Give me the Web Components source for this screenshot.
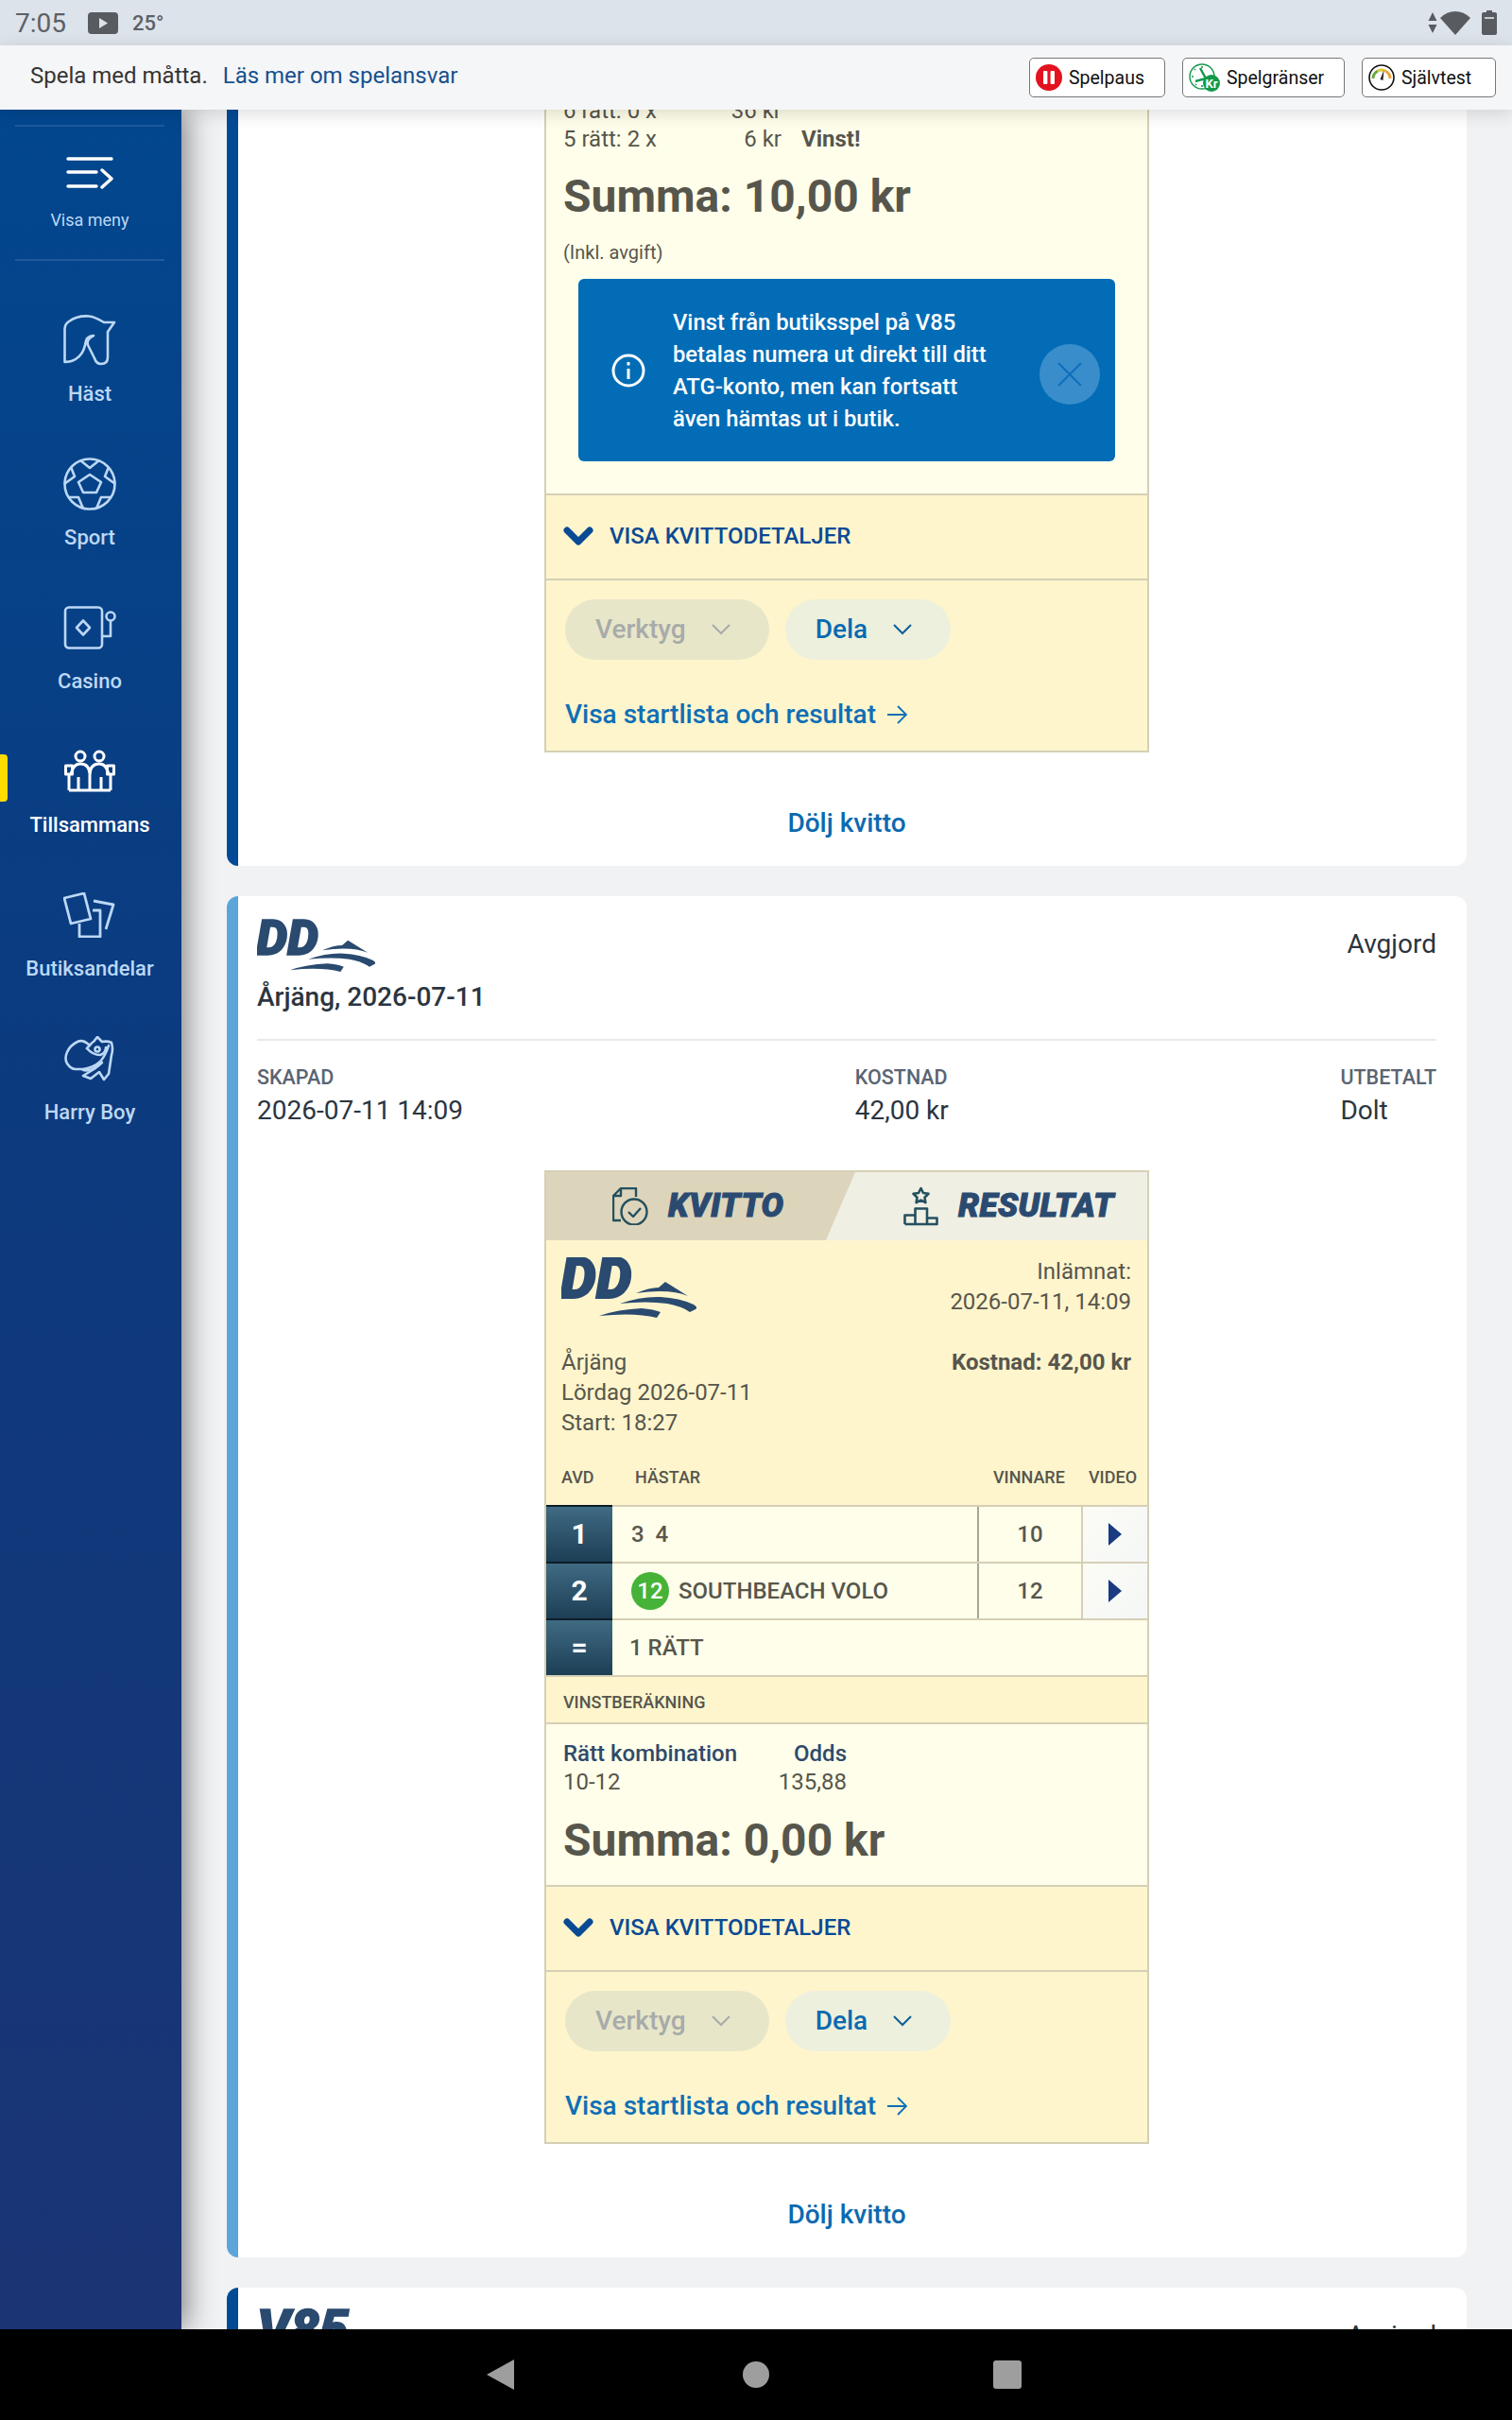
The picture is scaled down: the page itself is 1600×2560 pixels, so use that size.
<!DOCTYPE html>
<html lang="sv">
<head>
<meta charset="utf-8">
<title>Mina spel</title>
<style>
    html, body
    {
        margin: 0;
        height: 2560px;
        overflow: hidden;
        font-family: Roboto, "Liberation Sans", sans-serif;
    }

    body
    {
        display: flex;
        flex-direction: column;
        background: #000;
    }

    .shell
    {
        flex: 1;
        display: flex;
        min-height: 0;
    }
</style>
</head>
<body>
<atg-status-bar></atg-status-bar>

<atg-top-bar>
    <atg-limit-button style="width: 144px">
        <svg slot="icon" width="28" height="28" viewBox="0 0 28 28"><circle cx="14" cy="14" r="14" fill="#e2131f"/><rect x="8" y="7" width="4.4" height="14" rx="1" fill="#fff"/><rect x="15.6" y="7" width="4.4" height="14" rx="1" fill="#fff"/></svg>
        Spelpaus
    </atg-limit-button>
    <atg-limit-button style="width: 172px">
        <svg slot="icon" width="33" height="32" viewBox="0 0 33 32"><circle cx="14" cy="15" r="13" fill="none" stroke="#12994a" stroke-width="1.4"/><path d="M12 6l6 11-11 3" fill="none" stroke="#12994a" stroke-width="2.4"/><path d="M14 4v2M3 15h2M6 7l1 1M7 24l1-1M14 26v-2" stroke="#12994a" stroke-width="1.6"/><circle cx="24" cy="22" r="9" fill="#12994a"/><text x="24" y="27" font-family="Roboto" font-size="13" font-weight="700" fill="#fff" text-anchor="middle">Kr</text></svg>
        Spelgränser
    </atg-limit-button>
    <atg-limit-button style="width: 142px">
        <svg slot="icon" width="28" height="28" viewBox="0 0 28 28"><circle cx="14" cy="14" r="13" fill="#fff" stroke="#111" stroke-width="1.6"/><path d="M5 15a9.5 9.5 0 0 1 5-8" fill="none" stroke="#6aa83f" stroke-width="3"/><path d="M10 7a9.5 9.5 0 0 1 8 0" fill="none" stroke="#e2c83a" stroke-width="3"/><path d="M18 7a9.5 9.5 0 0 1 5 8" fill="none" stroke="#eda23a" stroke-width="3"/><path d="M16.500 6l-4 10 3 1z" fill="#222"/></svg>
        Självtest
    </atg-limit-button>
</atg-top-bar>

<div class="shell">
    <atg-side-menu>
        <atg-menu-item>
            <svg slot="icon" width="56" height="54" viewBox="0 0 56 54" fill="none" stroke="currentColor" stroke-width="2.6" stroke-linejoin="round"><path d="M1.500 50V15Q1.500 10 6 7C13 2 20 1 27 1.500C33 2 38 5 43 8H54L47 18V45Q47 52 40 52Q35 52 33 46L26 32Q24 26 32 22Q24 22 23 32Q21 42 13 47Q8 50 1.500 50Z"/></svg>
            Häst
        </atg-menu-item>
        <atg-menu-item>
            <svg slot="icon" width="56" height="56" viewBox="-28 -28 56 56" fill="none" stroke="currentColor" stroke-width="2.6" stroke-linejoin="round"><circle r="26.500"/><path d="M0-10L12-2L7 9H-7L-12-2Z"/><path d="M-10-25L0-17L10-25M-20-18L-16-8L-27 0M20-18L16-8L27 0M-23 14H-12L-7 26M23 14H12L7 26"/></svg>
            Sport
        </atg-menu-item>
        <atg-menu-item>
            <svg slot="icon" width="56" height="46" viewBox="0 0 56 46" fill="none" stroke="currentColor" stroke-width="2.600" stroke-linejoin="round"><rect x="2" y="1.500" width="39" height="43" rx="4"/><path d="M21 15.500L28 23L21 30.500L14 23Z"/><circle cx="50" cy="11" r="4.500"/><path d="M50 16V32H41"/></svg>
            Casino
        </atg-menu-item>
        <atg-menu-item active>
            <svg slot="icon" width="54" height="46" viewBox="0 0 54 46" fill="none" stroke="currentColor" stroke-width="3" stroke-linejoin="round"><circle cx="17" cy="7" r="5"/><circle cx="37" cy="7" r="5"/><path d="M5 43H49M5 43V27M49 43V27M15 43V29M39 43V29M27 43V27Q27 15 37 15Q45 15 47 27M27 25Q26 15 17 15Q9 15 7 27M1.500 17H8.500V26H1.500ZM45.500 17H52.500V26H45.500Z"/></svg>
            Tillsammans
        </atg-menu-item>
        <atg-menu-item>
            <svg slot="icon" width="56" height="48" viewBox="0 0 56 48" fill="none" stroke="currentColor" stroke-width="2.800" stroke-linejoin="round"><path d="M1 6L22 1L29 28L8 33Z"/><path d="M32 9L53 13L45 39"/><path d="M31 19H39V47H17V33"/></svg>
            Butiksandelar
        </atg-menu-item>
        <atg-menu-item>
            <svg slot="icon" width="54" height="48" viewBox="0 0 54 48" fill="none" stroke="currentColor" stroke-width="2.600" stroke-linejoin="round" stroke-linecap="round"><path d="M27 10Q20 3 14 6Q6 10 3 17Q0 24 3 29Q7 35 12 35H20Q32 33 38 27Q44 20 47 10"/><path d="M24 13Q30 6 31 6L35 1L40 6Q46 5 50 7Q52 14 50 20L47 40L42 46L37 38L28 45L20 42L33 34"/><path d="M24 13Q30 20 38 20Q44 18 44 12"/><circle cx="35" cy="14" r="2.500"/><path d="M20 36Q30 38 40 28"/></svg>
            Harry Boy
        </atg-menu-item>
    </atg-side-menu>

    <atg-bet-list>
        <atg-bet-card accent="#034a96" style="margin-top: -118px">
            <atg-ticket>
                <atg-ticket-section style="--section-pad: 62px 18px 34px">
                    <atg-win-line label="6 rätt: 0 x" amount="36 kr"></atg-win-line>
                    <atg-win-line label="5 rätt: 2 x" amount="6 kr" win="Vinst!"></atg-win-line>
                    <atg-sum style="margin-top: 18px">Summa: 10,00 kr</atg-sum>
                    <atg-fee-note>(Inkl. avgift)</atg-fee-note>
                    <atg-info-box>Vinst från butiksspel på V85 betalas numera ut direkt till ditt ATG-konto, men kan fortsatt även hämtas ut i butik.</atg-info-box>
                </atg-ticket-section>
                <atg-ticket-footer></atg-ticket-footer>
            </atg-ticket>
            <atg-hide-link slot="after">Dölj kvitto</atg-hide-link>
        </atg-bet-card>

        <atg-bet-card accent="#5ba5da">
            <atg-bet-head slot="head" status="Avgjord">
                <atg-game-logo slot="logo" style="--logo-w: 125px"></atg-game-logo>
                <span style="font-weight: 500">Årjäng, 2026-07-11</span>
            </atg-bet-head>
            <atg-bet-meta slot="head" created="2026-07-11 14:09" cost="42,00 kr" paid="Dolt"></atg-bet-meta>
            <atg-ticket>
                <atg-ticket-tabs></atg-ticket-tabs>
                <atg-ticket-info></atg-ticket-info>
                <atg-race-head></atg-race-head>
                <atg-race-row no="1" winner="10">3&nbsp;&nbsp;4</atg-race-row>
                <atg-race-row no="2" winner="12"><atg-horse-badge>12</atg-horse-badge>SOUTHBEACH VOLO</atg-race-row>
                <atg-race-row no="=" total>1 RÄTT</atg-race-row>
                <atg-section-title>VINSTBERÄKNING</atg-section-title>
                <atg-ticket-section style="--section-pad: 16px 18px 19px">
                    <atg-odds-table combo="10-12" odds="135,88"></atg-odds-table>
                    <atg-sum style="margin-top: 19px">Summa: 0,00 kr</atg-sum>
                </atg-ticket-section>
                <atg-ticket-footer></atg-ticket-footer>
            </atg-ticket>
            <atg-hide-link slot="after">Dölj kvitto</atg-hide-link>
        </atg-bet-card>

        <atg-bet-card accent="#034a96">
            <atg-bet-head slot="head" status="Avgjord">
                <atg-big-mark slot="logo">V85</atg-big-mark>
            </atg-bet-head>
        </atg-bet-card>
    </atg-bet-list>
</div>

<atg-nav-keys></atg-nav-keys>

<script>
// little helper, every element below is just a template plus an open shadow root
function defineElement(name, html, setup)
{
    const template = document.createElement("template")
    template.innerHTML = html
    customElements.define(name, class extends HTMLElement
    {
        constructor()
        {
            super()
            const shadow = this.attachShadow({mode:"open"})
            shadow.append(template.content.cloneNode(true))
        }

        connectedCallback()
        {
            if (setup) setup(this, this.shadowRoot)
        }
    })
}

function fill(root, selector, value)
{
    root.querySelector(selector).textContent = value
}

defineElement("atg-status-bar", `
    <style>
        :host
        {
            flex: none;
            display: flex;
            align-items: center;
            height: 48px;
            background: #dde3ea;
            color: #5c6066;
            padding: 0 16px;
            box-sizing: border-box;
        }
        .time { font-size: 28px; width: 77px; }
        .yt { display: block; margin-right: 15px; }
        .temp { font-size: 22px; font-weight: 500; flex: 1; }
        .right { display: flex; align-items: center; gap: 3px; }
    </style>
    <span class="time">7:05</span>
    <svg class="yt" width="32" height="23" viewBox="0 0 32 23"><rect width="32" height="23" rx="4" fill="#585c61"/><path d="M12 6l9 5.500-9 5.500z" fill="#dde3ea"/></svg>
    <span class="temp">25°</span>
    <div class="right">
        <svg width="10" height="22" viewBox="0 0 10 22"><path d="M5 0l4.500 9H.5zM5 22L.5 13h9z" fill="#585c61"/></svg>
        <svg width="32" height="25" viewBox="0 0 32 25" style="margin-right: 9px"><path d="M16 25L0 7Q7 0 16 0T32 7z" fill="#585c61"/></svg>
        <svg width="16" height="26" viewBox="0 0 16 26"><path d="M5 0h6v2h3q2 0 2 2v20q0 2-2 2H2q-2 0-2-2V4q0-2 2-2h3z" fill="#585c61"/><rect x="3" y="7" width="10" height="2" fill="#c6ccd3"/></svg>
    </div>
`)

defineElement("atg-top-bar", `
    <style>
        :host
        {
            flex: none;
            z-index: 3;
            display: flex;
            align-items: center;
            height: 68px;
            padding: 0 17px 0 32px;
            background: #f5f6f7;
            box-shadow: 0 4px 18px rgba(0, 0, 0, .14);
            font-size: 24px;
            color: #343434;
            box-sizing: border-box;
        }
        .text { flex: 1; margin-bottom: 4px; }
        a { color: #17508f; text-decoration: none; margin-left: 16px; }
        .buttons { display: flex; gap: 18px; }
    </style>
    <div class="text">Spela med måtta.<a>Läs mer om spelansvar</a></div>
    <div class="buttons"><slot></slot></div>
`)

defineElement("atg-limit-button", `
    <style>
        :host
        {
            display: flex;
            align-items: center;
            gap: 7px;
            height: 42px;
            padding: 0 0 0 6px;
            background: #fff;
            border: 1.5px solid #777;
            border-radius: 5px;
            box-sizing: border-box;
            font-size: 19.5px;
            color: #111;
        }
        ::slotted(svg) { display: block; flex: none; }
    </style>
    <slot name="icon"></slot><slot></slot>
`)

defineElement("atg-side-menu", `
    <style>
        :host
        {
            flex: none;
            z-index: 2;
            width: 192px;
            background: linear-gradient(#02478f, #0c3a7e 45%, #1b3474);
            box-shadow: 6px 0 28px rgba(0, 0, 0, .45);
            color: #bcd8f5;
            display: flex;
            flex-direction: column;
        }
        .toggle
        {
            margin: 16px 18px 54px 16px;
            padding: 32px 0 29px;
            border-top: 2px solid #1f5a9c;
            border-bottom: 2px solid #1f5a9c;
            display: flex;
            flex-direction: column;
            align-items: center;
            gap: 21px;
            font-size: 18px;
            line-height: 24px;
        }
        svg { display: block; margin-top: 0; }
        .items { display: grid; grid-auto-rows: 152px; }
    </style>
    <div class="toggle">
        <svg width="50" height="34" viewBox="0 0 50 34" fill="none" stroke="#fff" stroke-width="3.400" stroke-linecap="round" stroke-linejoin="round"><path d="M2 2H48M2 16H32M2 31H32M38 14L48 23L38 32"/></svg>
        <span>Visa meny</span>
    </div>
    <div class="items"><slot></slot></div>
`)

defineElement("atg-menu-item", `
    <style>
        :host
        {
            position: relative;
            display: flex;
            flex-direction: column;
            align-items: center;
            padding-right: 2px;
            font-size: 22px;
            font-weight: 500;
            line-height: 26px;
        }
        :host([active]) { color: #fff; }
        :host([active])::before
        {
            content: "";
            position: absolute;
            left: 0;
            top: 12px;
            width: 8px;
            height: 50px;
            background: #ffdc00;
            border-radius: 0 4px 4px 0;
        }
        .icon
        {
            height: 60px;
            display: flex;
            align-items: center;
            justify-content: center;
            margin-bottom: 14px;
        }
        ::slotted(svg) { display: block; }
    </style>
    <div class="icon"><slot name="icon"></slot></div>
    <slot></slot>
`)

defineElement("atg-bet-list", `
    <style>
        :host
        {
            flex: 1;
            min-width: 0;
            display: flex;
            flex-direction: column;
            gap: 32px;
            padding: 0 48px;
            background: #f1f2f4;
            overflow: hidden;
        }
    </style>
    <slot></slot>
`)

defineElement("atg-bet-card", `
    <style>
        :host
        {
            flex: none;
            display: block;
            background: #fff;
            border-radius: 12px;
            border-left: 12px solid #034a96;
            padding: 0 32px 25px 20px;
        }
    </style>
    <slot name="head"></slot>
    <slot></slot>
    <slot name="after"></slot>
`, (el) =>
{
    el.style.borderLeftColor = el.getAttribute("accent")
    // the list is scrolled, first card has its top hidden under the bar
    if (!el.querySelector("atg-bet-head")) el.style.paddingTop = "40px"
})

defineElement("atg-bet-head", `
    <style>
        :host
        {
            display: flex;
            justify-content: space-between;
            padding-top: 24px;
            font-size: 28px;
            line-height: 40px;
            color: #2b3540;
        }
        .logo { display: block; margin-bottom: 7px; }
        .status { margin-top: 7px; }
    </style>
    <div>
        <div class="logo"><slot name="logo"></slot></div>
        <slot></slot>
    </div>
    <div class="status"></div>
`, (el, root) => fill(root, ".status", el.getAttribute("status")))

defineElement("atg-game-logo", `
    <style>
        :host { display: block; width: var(--logo-w, 143px); }
        svg { display: block; width: 100%; height: auto; }
        text { font-family: Roboto, sans-serif; font-weight: 900; font-style: italic; }
    </style>
    <svg viewBox="0 0 143 64" fill="#2a4a70">
        <text x="-1" y="43" font-size="60" stroke="#2a4a70" stroke-width="1.800">DD</text>
        <path d="M79 38Q93 32 103 32L110 26L134 41Q115 33 79 38Z"/>
        <path d="M62 49Q85 41 105 42Q125 43 140 50Q145 53 142 55L136 58Q128 52 112 49Q90 46 62 49Z"/>
        <path d="M40 62Q60 55 85 54Q98 55 105 58L101 64Q78 58 40 62Z"/>
    </svg>
`)

defineElement("atg-big-mark", `
    <style>
        :host
        {
            display: block;
            font-size: 55px;
            line-height: 40px;
            font-weight: 900;
            font-style: italic;
            color: #2a4a70;
            -webkit-text-stroke: 1.500px #2a4a70;
        }
    </style>
    <slot></slot>
`)

defineElement("atg-bet-meta", `
    <style>
        :host
        {
            display: flex;
            justify-content: space-between;
            margin: 24px 0 45px;
            padding-top: 27px;
            border-top: 2px solid #e8e9ea;
        }
        b
        {
            display: block;
            font-size: 21.500px;
            line-height: 24px;
            font-weight: 500;
            color: #5a6472;
        }
        span
        {
            display: block;
            margin-top: 5px;
            font-size: 28px;
            line-height: 36px;
            color: #2b3540;
        }
    </style>
    <div><b>SKAPAD</b><span class="a"></span></div>
    <div><b>KOSTNAD</b><span class="b"></span></div>
    <div><b>UTBETALT</b><span class="c"></span></div>
`, (el, root) =>
{
    fill(root, ".a", el.getAttribute("created"))
    fill(root, ".b", el.getAttribute("cost"))
    fill(root, ".c", el.getAttribute("paid"))
})

defineElement("atg-ticket", `
    <style>
        :host
        {
            display: block;
            width: 640px;
            margin: 0 auto;
            box-sizing: border-box;
            border: 2px solid #d5cfb6;
            background: #fef5cd;
            font-size: 24px;
            line-height: 32px;
            color: #57564c;
        }
    </style>
    <slot></slot>
`)

defineElement("atg-ticket-tabs", `
    <style>
        :host
        {
            display: flex;
            height: 72px;
            background: #f0efe4;
            font-size: 35px;
            font-weight: 900;
            font-style: italic;
            letter-spacing: .4px;
            color: #2a4a70;
            -webkit-text-stroke: 1px #2a4a70;
        }
        div { display: flex; align-items: center; gap: 21px; }
        .on
        {
            flex: none;
            width: 327px;
            padding-left: 70px;
            box-sizing: border-box;
            background: #ddd5bb;
            clip-path: polygon(0 0, 100% 0, 296px 100%, 0 100%);
        }
        .off { padding-left: 51px; }
        svg { display: block; flex: none; }
    </style>
    <div class="on">
        <svg width="38" height="40" viewBox="0 0 38 40" fill="none" stroke="#24505f" stroke-width="2.400" stroke-linejoin="round"><path d="M9 1H25V10M9 35H1V9L9 1V9H1"/><circle cx="23" cy="26" r="13.500"/><path d="M17 26l5 5 8-9"/></svg>
        <span>KVITTO</span>
    </div>
    <div class="off">
        <svg width="37" height="42" viewBox="0 0 37 42" fill="none" stroke="#24505f" stroke-width="2.600" stroke-linejoin="round"><path d="M18.500 2l2.500 5 5.500.8-4 3.900.9 5.500-4.900-2.600-4.900 2.600.9-5.500-4-3.900 5.500-.8z"/><path d="M12.500 40V23.500H25V40M1.500 40V30.500H12.500M25 33.500H35.500V40H1.500"/></svg>
        <span>RESULTAT</span>
    </div>
`)

defineElement("atg-ticket-info", `
    <style>
        :host
        {
            display: flex;
            justify-content: space-between;
            padding: 18px 17px 13px 16px;
        }
        .place { margin-top: 31px; }
        .right { margin-top: -1px; text-align: right; }
        b { display: block; margin-top: 32px; font-weight: 700; }
        atg-game-logo { display: block; }
    </style>
    <div>
        <atg-game-logo></atg-game-logo>
        <div class="place">Årjäng<br>Lördag 2026-07-11<br>Start: 18:27</div>
    </div>
    <div class="right">
        Inlämnat:<br>2026-07-11, 14:09
        <b>Kostnad: 42,00 kr</b>
    </div>
`)

defineElement("atg-race-head", `
    <style>
        :host
        {
            display: grid;
            grid-template-columns: 94px 379px 101px auto;
            align-items: center;
            height: 58px;
            font-size: 18px;
            font-weight: 500;
        }
        .avd { padding-left: 16px; }
    </style>
    <span class="avd">AVD</span><span>HÄSTAR</span><span>VINNARE</span><span>VIDEO</span>
`)

defineElement("atg-race-row", `
    <style>
        :host
        {
            display: flex;
            height: 60px;
            box-sizing: border-box;
            border-top: 2px solid #d5cfb6;
            background: #fffeea;
            font-weight: 500;
        }
        .avd
        {
            flex: none;
            width: 70px;
            margin-top: -2px;
            border-top: 2px solid #0d1c28;
            display: flex;
            align-items: center;
            justify-content: center;
            background: linear-gradient(#3f6b83, #1d3e55);
            color: #fff;
            font-size: 30px;
            font-weight: 700;
        }
        .main
        {
            flex: 1;
            display: flex;
            align-items: center;
            padding-left: 20px;
        }
        .win
        {
            flex: none;
            box-sizing: border-box;
            width: 110px;
            border-left: 2px solid #a8a694;
            display: flex;
            align-items: center;
            justify-content: center;
        }
        .vid
        {
            flex: none;
            box-sizing: border-box;
            width: 70px;
            border-left: 2px solid #d5cfb6;
            display: flex;
            align-items: center;
            justify-content: center;
            background: linear-gradient(135deg, #fbfcf5, #f5f7f7);
        }
        :host([total]) .win, :host([total]) .vid { display: none; }
        :host([total]) .main { padding-left: 18px; }
    </style>
    <div class="avd"></div>
    <div class="main"><slot></slot></div>
    <div class="win"></div>
    <div class="vid"><svg width="14" height="24" viewBox="0 0 14 24"><path d="M0 0L14 12L0 24Z" fill="#1a3a82"/></svg></div>
`, (el, root) =>
{
    fill(root, ".avd", el.getAttribute("no"))
    fill(root, ".win", el.getAttribute("winner") || "")
})

defineElement("atg-horse-badge", `
    <style>
        :host
        {
            display: flex;
            align-items: center;
            justify-content: center;
            width: 40px;
            height: 40px;
            margin-right: 10px;
            border-radius: 50%;
            background: #46b338;
            color: #fff;
            font-size: 24px;
        }
    </style>
    <slot></slot>
`)

defineElement("atg-section-title", `
    <style>
        :host
        {
            display: block;
            box-sizing: border-box;
            height: 50px;
            padding: 15px 0 0 18px;
            border-top: 2px solid #d5cfb6;
            font-size: 18px;
            line-height: 24px;
            font-weight: 500;
        }
    </style>
    <slot></slot>
`)

defineElement("atg-ticket-section", `
    <style>
        :host
        {
            display: block;
            padding: var(--section-pad, 0 18px);
            border-top: 2px solid #d5cfb6;
            background: #fffeea;
        }
        :host(:first-child) { border-top: 0; }
    </style>
    <slot></slot>
`)

defineElement("atg-win-line", `
    <style>
        :host
        {
            display: grid;
            grid-template-columns: 231px auto;
            column-gap: 21px;
            justify-content: start;
            line-height: 30px;
            font-size: 24px;
        }
        div { display: flex; justify-content: space-between; }
        b { font-weight: 700; }
    </style>
    <div><span class="l"></span><span class="a"></span></div>
    <b class="w"></b>
`, (el, root) =>
{
    fill(root, ".l", el.getAttribute("label"))
    fill(root, ".a", el.getAttribute("amount"))
    fill(root, ".w", el.getAttribute("win") || "")
})

defineElement("atg-sum", `
    <style>
        :host
        {
            display: block;
            font-size: 48px;
            line-height: 56px;
            font-weight: 700;
        }
    </style>
    <slot></slot>
`)

defineElement("atg-fee-note", `
    <style>
        :host
        {
            display: block;
            margin-top: 16px;
            font-size: 20px;
            line-height: 30px;
        }
    </style>
    <slot></slot>
`)

defineElement("atg-info-box", `
    <style>
        :host
        {
            display: flex;
            align-items: center;
            box-sizing: border-box;
            width: 568px;
            height: 193px;
            margin: 13px 0 0 16px;
            padding-left: 35px;
            background: #026cb6;
            border-radius: 6px;
            color: #fff;
            font-size: 23.800px;
            line-height: 34px;
            font-weight: 500;
        }
        .i { flex: none; display: block; }
        .text { width: 342px; margin-left: 29px; flex: none; }
        .close
        {
            flex: none;
            width: 64px;
            height: 64px;
            margin: 8px 0 0 46px;
            border-radius: 50%;
            background: #3a8dcb;
            display: flex;
            align-items: center;
            justify-content: center;
        }
    </style>
    <svg class="i" width="36" height="36" viewBox="0 0 36 36" fill="none" stroke="#fff" stroke-width="3"><circle cx="18" cy="18" r="16"/><path d="M18 16V27M18 9V12.500"/></svg>
    <div class="text"><slot></slot></div>
    <div class="close"><svg width="28" height="28" viewBox="0 0 28 28" stroke="#0f70bd" stroke-width="2.200"><path d="M2 2L26 26M26 2L2 26"/></svg></div>
`)

defineElement("atg-odds-table", `
    <style>
        :host
        {
            display: grid;
            grid-template-columns: 184px 116px;
            line-height: 30px;
            white-space: nowrap;
        }
        b { font-weight: 500; color: #2f4a6b; }
        .r { text-align: right; }
    </style>
    <b>Rätt kombination</b><b class="r">Odds</b>
    <span class="c"></span><span class="o r"></span>
`, (el, root) =>
{
    fill(root, ".c", el.getAttribute("combo"))
    fill(root, ".o", el.getAttribute("odds"))
})

defineElement("atg-ticket-footer", `
    <style>
        :host { display: block; }
        .details
        {
            display: flex;
            align-items: center;
            gap: 17px;
            height: 92px;
            padding: 0 0 2px 18px;
            box-sizing: border-box;
            border-top: 2px solid #d5cfb6;
            border-bottom: 2px solid #d5cfb6;
            color: #0a4a94;
            font-weight: 500;
        }
        .tools
        {
            display: flex;
            gap: 17px;
            padding: 20px 0 38px 20px;
        }
        .pill
        {
            display: flex;
            align-items: center;
            gap: 27px;
            height: 64px;
            padding: 0 41px 0 32px;
            border-radius: 32px;
            background: #edf0dc;
            color: #0b6ab0;
            font-size: 28px;
            font-weight: 500;
        }
        .pill.off { background: #e8e6c8; color: #a7abaa; }
        .link
        {
            display: flex;
            align-items: center;
            gap: 12px;
            height: 40px;
            padding: 0 0 18px 20px;
            color: #0f6fb5;
            font-size: 28px;
            font-weight: 500;
        }
        svg { display: block; flex: none; }
    </style>
    <div class="details">
        <svg width="32" height="20" viewBox="0 0 32 20" fill="none" stroke="#0a4a94" stroke-width="7" stroke-linecap="round" stroke-linejoin="round"><path d="M4 4L16 16L28 4"/></svg>
        <span>VISA KVITTODETALJER</span>
    </div>
    <div class="tools">
        <div class="pill off"><span>Verktyg</span><svg width="20" height="12" viewBox="0 0 20 12" fill="none" stroke="#a7abaa" stroke-width="2"><path d="M1 1L10 10L19 1"/></svg></div>
        <div class="pill"><span>Dela</span><svg width="20" height="12" viewBox="0 0 20 12" fill="none" stroke="#0d5f99" stroke-width="2"><path d="M1 1L10 10L19 1"/></svg></div>
    </div>
    <div class="link">
        <span>Visa startlista och resultat</span>
        <svg width="21" height="20" viewBox="0 0 21 20" fill="none" stroke="#0f6fb5" stroke-width="1.800"><path d="M0 10H20M11 1L20 10L11 19"/></svg>
    </div>
`)

defineElement("atg-hide-link", `
    <style>
        :host
        {
            display: block;
            margin-top: 55px;
            text-align: center;
            font-size: 28px;
            line-height: 40px;
            font-weight: 500;
            color: #0b6ab0;
        }
    </style>
    <slot></slot>
`)

defineElement("atg-nav-keys", `
    <style>
        :host
        {
            flex: none;
            z-index: 4;
            height: 96px;
            background: #000;
            display: grid;
            grid-template-columns: 515px 29px 242px 28px 237px 30px;
            align-items: center;
        }
        svg { grid-row: 1; }
        .a { grid-column: 2; }
        .b { grid-column: 4; }
        .c { grid-column: 6; }
    </style>
    <svg class="a" width="29" height="32" viewBox="0 0 29 32"><path d="M29 0V32L0 16Z" fill="#9e9e9e"/></svg>
    <svg class="b" width="28" height="28" viewBox="0 0 28 28"><circle cx="14" cy="14" r="14" fill="#9e9e9e"/></svg>
    <svg class="c" width="30" height="30" viewBox="0 0 30 30"><rect width="30" height="30" rx="3" fill="#9e9e9e"/></svg>
`)
</script>
</body>
</html>
